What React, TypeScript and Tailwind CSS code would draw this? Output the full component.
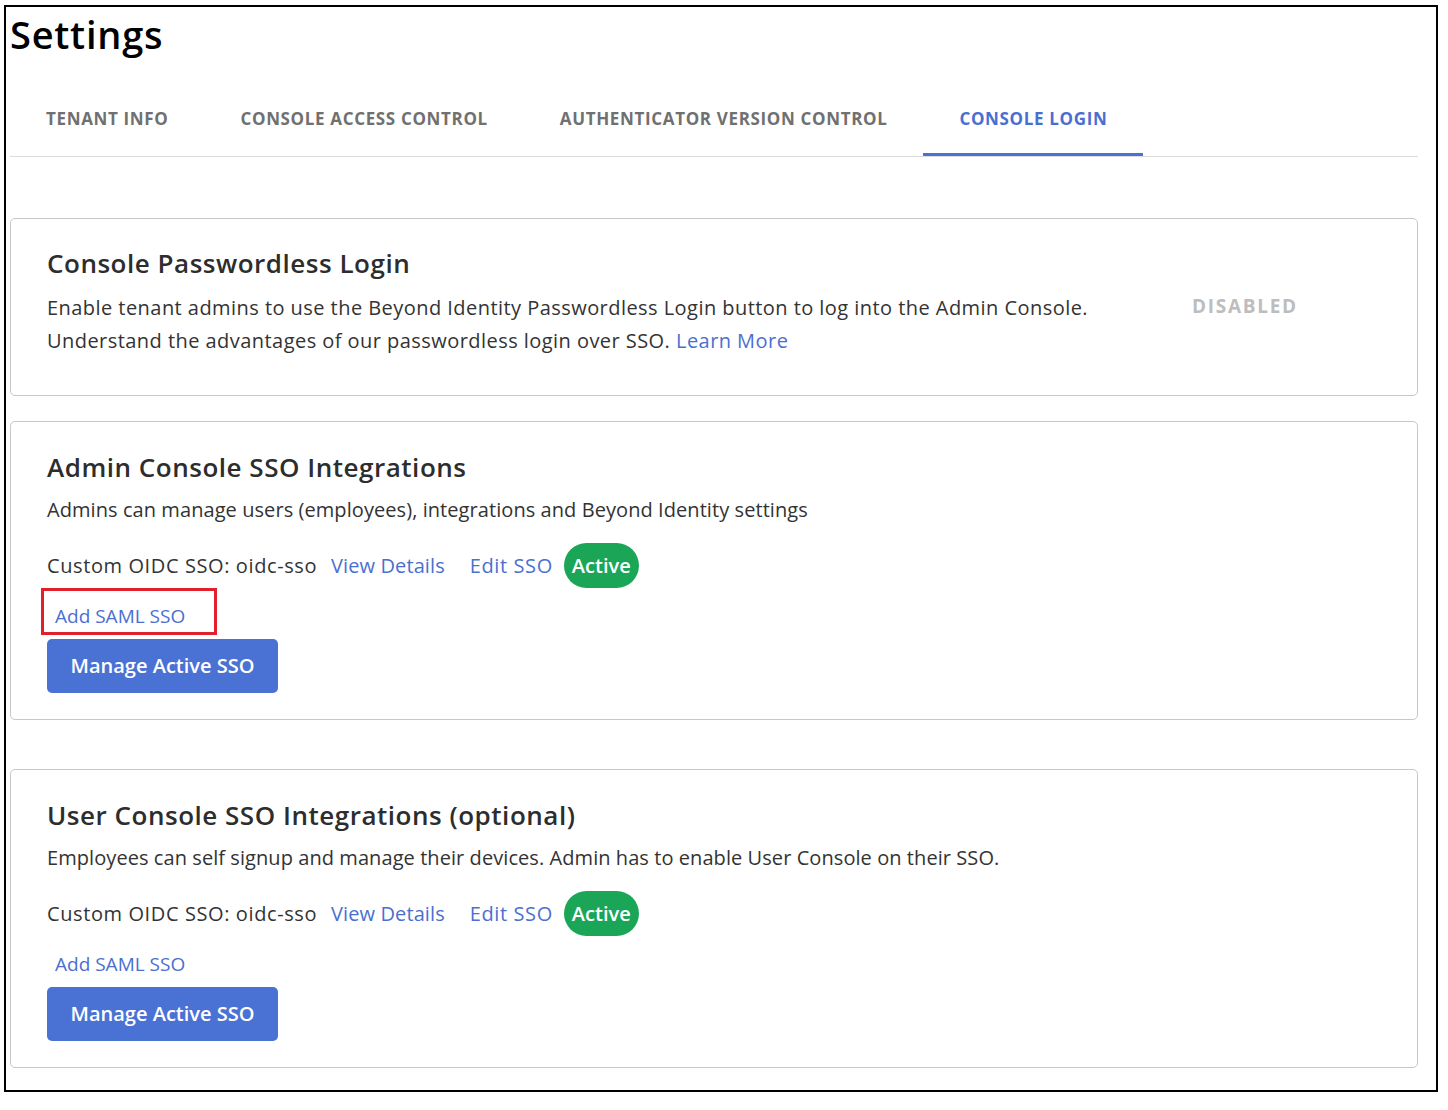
import React from "react";

const font = { fontFamily: '"Open Sans", "Liberation Sans", sans-serif' };

function Tab(props: { label: string; active?: boolean }) {
  return (
    <div
      className={
        "border-b-[3px] px-[36px] pt-[27px] pb-[22px] text-[17px] leading-[24px] font-bold uppercase tracking-[0.65px] " +
        (props.active ? "border-[#4a72d4] text-[#4a6fd1]" : "border-transparent text-[#707070]")
      }
    >
      {props.label}
    </div>
  );
}

function SsoBlock(props: { title: string; description: string; highlight?: boolean }) {
  return (
    <div className="rounded-[5px] border border-[#c8c8c8] px-[36px] pt-[29px] pb-[26px]">
      <h2 className="text-[26px] leading-[32px] font-semibold tracking-[0.02em] text-[#2d2d2d]">{props.title}</h2>
      <p className="mt-[11px] text-[20px] leading-[32px] tracking-[0.07px] text-[#333]">{props.description}</p>
      <div className="mt-[17px] flex items-center text-[20px] text-[#333]">
        <span className="tracking-[0.6px]">Custom OIDC SSO: oidc-sso</span>
        <span className="ml-[14px] tracking-[0.1px] text-[#4a6fd1]">View Details</span>
        <span className="ml-[25px] tracking-[0.6px] text-[#4a6fd1]">Edit SSO</span>
        <span className="ml-[11px] flex h-[45px] items-center rounded-full bg-[#1aa557] px-[8px] font-semibold text-white">
          Active
        </span>
      </div>
      <div className="relative mt-[5px] flex h-[46px] items-center">
        <span className="px-[8px] text-[19px] text-[#4a6fd1]">Add SAML SSO</span>
        {props.highlight && (
          <div className="absolute top-[-5px] left-[-6px] h-[47px] w-[176px] border-[3px] border-[#e0202a]" />
        )}
      </div>
      <button className="flex h-[54px] w-[231px] items-center justify-center rounded-[5px] bg-[#4a72d5] text-[20px] font-semibold text-white">
        Manage Active SSO
      </button>
    </div>
  );
}

export default function App() {
  return (
    <div className="bg-white pt-[5px] pl-[4px]" style={font}>
      <div className="h-[1087px] w-[1434px] border-2 border-black pr-[18px] pl-[4px]">
        <h1 className="pt-[3px] text-[38px] leading-[48px] font-semibold tracking-[0.02em] text-black">Settings</h1>
        <div className="mt-[22px] flex border-b border-[#dcdcdc]">
          <Tab label="Tenant Info" />
          <Tab label="Console Access Control" />
          <Tab label="Authenticator Version Control" />
          <Tab label="Console Login" active />
        </div>

        <div className="mt-[61px] flex items-center rounded-[5px] border border-[#c8c8c8] pl-[36px] pt-[28px] pb-[38px]">
          <div className="flex-1">
            <h2 className="text-[26px] leading-[32px] font-semibold tracking-[0.02em] text-[#2d2d2d]">
              Console Passwordless Login
            </h2>
            <p className="mt-[12px] text-[20px] leading-[33px] tracking-[0.45px] text-[#333]">
              Enable tenant admins to use the Beyond Identity Passwordless Login button to log into the Admin Console.
              <br />
              Understand the advantages of our passwordless login over SSO.{" "}
              <span className="text-[#4a6fd1]">Learn More</span>
            </p>
          </div>
          <div className="w-[225px] shrink-0 pt-[9px] text-[19px] font-bold tracking-[1.7px] text-[#bdbdbd]">
            DISABLED
          </div>
        </div>

        <div className="mt-[25px]">
          <SsoBlock
            title="Admin Console SSO Integrations"
            description="Admins can manage users (employees), integrations and Beyond Identity settings"
            highlight
          />
        </div>

        <div className="mt-[49px]">
          <SsoBlock
            title="User Console SSO Integrations (optional)"
            description="Employees can self signup and manage their devices. Admin has to enable User Console on their SSO."
          />
        </div>
      </div>
    </div>
  );
}
